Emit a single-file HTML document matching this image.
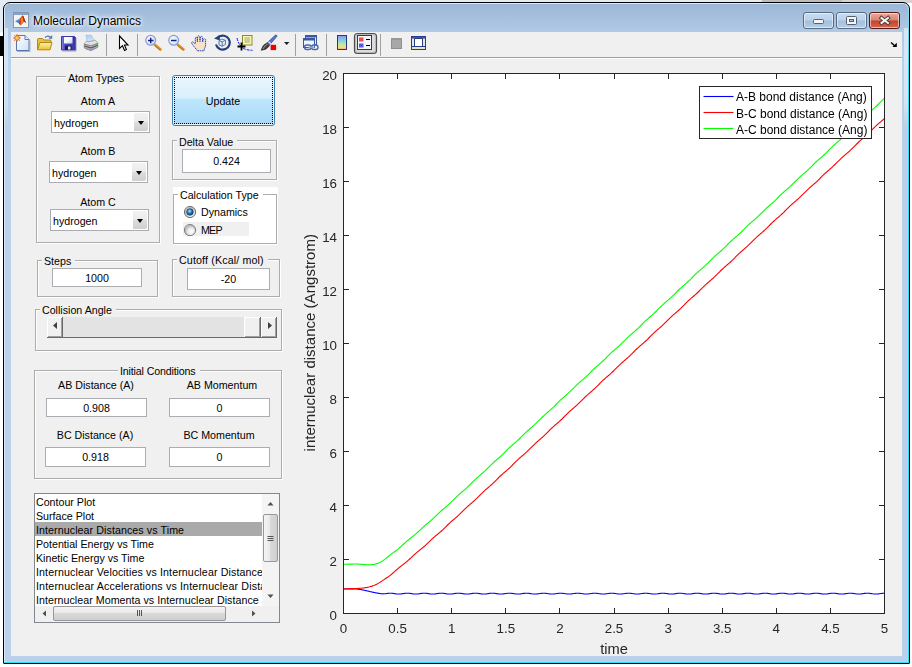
<!DOCTYPE html>
<html><head><meta charset="utf-8"><title>Molecular Dynamics</title>
<style>
html,body{margin:0;padding:0;}
body{width:912px;height:667px;overflow:hidden;background:#fff;position:relative;font-family:"Liberation Sans",Arial,sans-serif;font-size:10.67px;color:#000;}
div,span{box-sizing:border-box;}
.abs{position:absolute;}
#bgtop{left:0;top:0;width:912px;height:3px;background:linear-gradient(90deg,#e4ebf4 0,#e4ebf4 762px,#bdbdbd 762px,#bdbdbd 842px,#d4d4d4 842px);}
#bgleft{left:0;top:0;width:4px;height:36px;background:linear-gradient(#e4ebf4 0,#e4ebf4 32px,#fff 33px);}
#bgblack{left:0;top:36px;width:4px;height:20px;background:#000;}
#win{left:3px;top:2px;width:907px;height:662px;border:1px solid #000;border-radius:7px 7px 1px 1px;
 background:linear-gradient(#9cb7d7 0px,#a5bfdd 14px,#b2cae6 30px,#b9d1ea 60px,#b9d1ea 100%);box-shadow:inset 0 0 0 1px #d9e8f7;}
#cyan{left:4px;top:662px;width:905px;height:1px;background:#35dff5;}
#cyanr{left:908px;top:8px;width:1px;height:655px;background:linear-gradient(#8fd8f0,#35dff5 60px,#35dff5);}
#client{left:11px;top:32px;width:891px;height:624px;background:#f0f0f0;}
#tbline{left:11px;top:57px;width:891px;height:1px;background:#a0a0a0;}
#tbline2{left:11px;top:58px;width:891px;height:1px;background:#fff;}
#title{left:33px;top:13px;font-size:12px;line-height:16px;white-space:nowrap;color:#000;text-shadow:0 0 6px #fff,0 0 6px #fff,0 0 3px #fff;}
.cap{top:12px;height:17px;border:1px solid #5a6b80;border-radius:3px;box-shadow:inset 0 0 0 1px rgba(255,255,255,.55);}
.cap.n{background:linear-gradient(#c8dbf0 0,#bcd2ea 48%,#a3bfdf 52%,#b4cde8 100%);}
.cap.x{background:linear-gradient(#e9a99b 0,#d98573 48%,#c3422a 52%,#d3694f 100%);border-color:#5a1a14;}
.panel{border:1px solid #acacac;box-shadow:1px 1px 0 #fff, inset 1px 1px 0 #fff;}
.ptitle{background:#f0f0f0;white-space:nowrap;line-height:13px;height:13px;padding:1px 4px 0 2px;margin-left:-1px;}
.lbl{white-space:nowrap;line-height:13px;height:14px;text-align:center;padding-top:1px;}
.edit{background:#fff;border:1px solid #abadb3;text-align:center;line-height:1;white-space:nowrap;}
.edit span{position:absolute;left:0;right:0;text-align:center;}
.combo{background:#fff;border:1px solid #abadb3;}
.combo .t{position:absolute;left:2px;top:5px;line-height:13px;}
.combo .b{position:absolute;right:1px;top:1px;bottom:1px;width:14px;background:linear-gradient(#f2f2f2,#ebebeb 48%,#dddddd 52%,#cfcfcf);border-radius:0 2px 2px 0;}
.combo .b:after{content:"";position:absolute;left:4px;top:8px;border:3.5px solid transparent;border-top:4px solid #000;border-bottom:0;}
</style></head><body>
<div class="abs" id="bgleft"></div>
<div class="abs" id="bgtop"></div>
<div class="abs" id="bgblack"></div>
<div class="abs" id="win"></div>
<div class="abs" id="cyan"></div><div class="abs" id="cyanr"></div>
<div class="abs" style="left:904px;top:28px;width:4px;height:100px;background:linear-gradient(rgba(255,255,255,.5),rgba(255,255,255,.4) 75%,rgba(255,255,255,0));"></div><div class="abs" style="left:5px;top:28px;width:3px;height:100px;background:linear-gradient(rgba(255,255,255,.45),rgba(255,255,255,.3) 75%,rgba(255,255,255,0));"></div>
<div class="abs" id="client"></div>
<div class="abs" id="tbline"></div><div class="abs" id="tbline2"></div>
<div class="abs" id="title">Molecular Dynamics</div>
<!--CAPTION-->
<div class="abs cap n" style="left:803px;width:31px;"></div>
<div class="abs cap n" style="left:836px;width:31px;"></div>
<div class="abs cap x" style="left:869px;width:31px;"></div>
<!--TBSTART--><svg class="abs" style="left:0;top:0" width="912" height="64">
<defs>
<linearGradient id="gpage" x1="0" y1="0" x2="1" y2="1"><stop offset="0" stop-color="#ffffff"/><stop offset="1" stop-color="#cfe0f7"/></linearGradient>
<linearGradient id="gfold" x1="0" y1="0" x2="0" y2="1"><stop offset="0" stop-color="#fff3a8"/><stop offset="1" stop-color="#f0c030"/></linearGradient>
<linearGradient id="gcb" x1="0" y1="0" x2="0" y2="1"><stop offset="0" stop-color="#9a8ce8"/><stop offset="0.35" stop-color="#7fd0e8"/><stop offset="0.6" stop-color="#b8e8a8"/><stop offset="0.85" stop-color="#f8e080"/><stop offset="1" stop-color="#f0a080"/></linearGradient>
<linearGradient id="glens" x1="0" y1="0" x2="1" y2="1"><stop offset="0" stop-color="#ffffff"/><stop offset="1" stop-color="#b8e4ee"/></linearGradient>
<linearGradient id="gmat" x1="0" y1="0" x2="1" y2="0"><stop offset="0" stop-color="#2a6fc0"/><stop offset="0.45" stop-color="#5aa0d8"/><stop offset="0.55" stop-color="#c83018"/><stop offset="0.8" stop-color="#f08020"/><stop offset="1" stop-color="#b82818"/></linearGradient>
</defs>
<!-- matlab title icon -->
<rect x="13.5" y="12.5" width="15" height="15" fill="#f4f4f4" stroke="#8a97a8"/>
<rect x="14" y="13" width="14" height="2" fill="#7fa6d6"/>
<path d="M15.1 21.3 L19.8 18.6 L21.6 20.6 L18.6 23.3 z" fill="#3f86d0"/>
<path d="M15.1 21.3 L19.8 18.6 L20.4 19.4 z" fill="#7fc0e8"/>
<path d="M19.8 18.6 Q21 17.5 22.2 15.6 Q23.4 15.2 24.2 18 Q25.2 21.2 26.5 23.4 Q25 21.600 23.900 21.700 Q22.500 23.500 20.300 25.600 Q19.600 24.300 18.600 23.300 Q20.300 21.200 19.800 18.600 z" fill="#c8381c"/>
<path d="M20.6 19.2 Q21.6 17.6 22.300 15.900 Q23.200 18.500 23.600 21.600 Q22.300 23.300 20.400 25.200 Q21.600 22.200 20.600 19.200z" fill="#f08a1c"/>
<path d="M22.3 15.9 Q23.300 15.600 24 18 Q24.900 21 26.200 23 Q24.800 21.300 23.700 21.500 Q23.400 18.500 22.300 15.900z" fill="#a82418"/>
<!-- new -->
<path d="M16.5 35.5 h8.5 l4 4 v11 h-12.5z" fill="url(#gpage)" stroke="#5a74b0"/>
<path d="M25 35.5 v4 h4" fill="#e8f0fc" stroke="#5a74b0"/>
<path d="M17 51.5 h13 v-11" fill="none" stroke="#8898b8" opacity="0.7"/>
<g stroke="#e06030" stroke-width="1"><path d="M17 34.2v7.6M13.2 38h7.6M14.3 35.3l5.4 5.4M19.7 35.3l-5.4 5.4"/></g>
<circle cx="17" cy="38" r="2.3" fill="#f8d048" stroke="#e86830" stroke-width="1"/>
<!-- open -->
<path d="M37.5 49.5 v-10 q0 -1 1 -1 h4 l1.5 1.5 h6 q1 0 1 1 v2" fill="#e8c040" stroke="#b08818"/>
<path d="M37.5 49.8 l2.5 -7.3 h12 l-2 7.3z" fill="url(#gfold)" stroke="#b08818"/>
<path d="M45 37.5 q3 -3 6 0.2" fill="none" stroke="#4878c0" stroke-width="1.3"/>
<path d="M52.2 35 v3.8 h-3.6z" fill="#4878c0"/>
<!-- save -->
<linearGradient id="gsave" x1="0" y1="0" x2="1" y2="0"><stop offset="0" stop-color="#8c8ce4"/><stop offset="0.2" stop-color="#5050cc"/><stop offset="1" stop-color="#3434a4"/></linearGradient>
<linearGradient id="glabel" x1="0" y1="0" x2="1" y2="1"><stop offset="0" stop-color="#ffffff"/><stop offset="0.5" stop-color="#f4f6fc"/><stop offset="1" stop-color="#c4cce4"/></linearGradient>
<path d="M61.500 36.500 h13 l1 1 v12.500 h-14z" fill="url(#gsave)" stroke="#3838a8"/>
<path d="M62.500 51 h13.500 v-13" stroke="#8888b8" fill="none" opacity="0.8"/>
<rect x="64" y="37" width="8.500" height="6.500" fill="url(#glabel)"/>
<rect x="65" y="45.500" width="6.500" height="4.500" fill="#1c1c5c"/>
<rect x="68" y="46.500" width="2.500" height="3" fill="#e8e8f4"/>
<rect x="73.300" y="37.500" width="1" height="1.300" fill="#2a2a80"/>
<!-- print -->
<linearGradient id="gpaper" x1="0" y1="0" x2="0" y2="1"><stop offset="0" stop-color="#a8ccf4"/><stop offset="1" stop-color="#dcecfc"/></linearGradient>
<path d="M85.800 35.300 L91.300 35.300 L94.200 40.600 L87.400 41.800 Z" fill="url(#gpaper)" stroke="#98b8e0" stroke-width="0.600"/>
<path d="M84.300 43.200 L86.800 40.900 L87.400 41.800 L94.200 40.600 L94.800 39.900 L97.800 42.600 L97.800 43.500 L91 45.800 L84.300 44.200Z" fill="#e2e2e2" stroke="#909090" stroke-width="0.700"/>
<path d="M84.300 44.200 L91 45.800 L97.800 43.500 L97.800 47.200 L91 50.500 L84.300 48 Z" fill="#b0b0b0" stroke="#787878" stroke-width="0.700"/>
<path d="M84.500 46 L91 48 L97.600 45.300" stroke="#4c4c4c" stroke-width="1" fill="none"/>
<path d="M86 48.900 L91 50.400 L96.500 48" stroke="#8088c0" stroke-width="0.800" fill="none"/>
<rect x="95.200" y="43.900" width="1.300" height="1.300" fill="#30d030"/>
<!-- separators -->
<g stroke="#a0a0a0"><path d="M106.500 34v22M137.500 34v22M295.500 34v22M326.500 34v22M380.500 34v22"/></g>
<!-- pointer -->
<path d="M119.500 36 v12.500 l3 -2.800 l2 4.800 l1.900 -0.900 l-2 -4.600 h3.600z" fill="#fff" stroke="#000" stroke-width="1.100" stroke-linejoin="miter"/>
<!-- zoom in -->
<path d="M154.500 44.500 l6 5" stroke="#d89020" stroke-width="2.600" stroke-linecap="round"/>
<path d="M155 45.800 l5 4.200" stroke="#a86810" stroke-width="0.800"/>
<circle cx="150.700" cy="40.300" r="4.900" fill="url(#glens)" stroke="#9098d8" stroke-width="1.300"/>
<path d="M148 40.500h5.500M150.700 37.700v5.500" stroke="#18187a" stroke-width="1.400"/>
<!-- zoom out -->
<path d="M177.500 44.500 l6 5" stroke="#d89020" stroke-width="2.600" stroke-linecap="round"/>
<path d="M178 45.800 l5 4.200" stroke="#a86810" stroke-width="0.800"/>
<circle cx="173.700" cy="40.300" r="4.900" fill="url(#glens)" stroke="#9098d8" stroke-width="1.300"/>
<path d="M171 40.500h5.500" stroke="#18187a" stroke-width="1.400"/>
<!-- hand -->
<path d="M197.500 50.800 L194 46.500 L191.800 43.500 Q191.300 42 192.500 41.800 Q193.800 42 195.300 44 L195.300 38 Q196.200 36.300 197.200 38 L197.400 42 L197.600 36.500 Q198.600 34.800 199.700 36.500 L200 41.600 L200.500 37 Q201.600 35.600 202.500 37.200 L202.600 42.200 L203.400 39.200 Q204.500 38 205.600 39.500 L205.600 45 Q205.400 47.500 204.200 49 L204 50.800 Z" fill="#fae0c8" stroke="#2850b8" stroke-width="1" stroke-dasharray="1.600 0.600"/>
<!-- rotate -->
<path d="M218.500 37 a7 7 0 1 1 -2.500 7.500" fill="none" stroke="#22407a" stroke-width="2.200"/>
<path d="M214 38.500 l5.500 -3.500 l0.500 5.500z" fill="#22407a"/>
<path d="M219 40.500 l3 -1.500 l3.500 1.300 v4.200 l-3.300 1.800 l-3.200 -1.500z M219 40.500 l3.200 1.300 l3.300 -1.500 M222.200 41.800 v4.500" fill="#dfe8f4" stroke="#4870a8" stroke-width="0.900"/>
<!-- data cursor -->
<rect x="242.500" y="35.500" width="9.500" height="9.500" fill="#f8f6b8" stroke="#8c8838"/>
<path d="M244.500 38h5.500M244.500 40h5.500M244.500 42h5.500" stroke="#9c9858" stroke-width="0.900"/>
<path d="M237 38 q1.500 7 6 10 q3 2.200 9.500 2.300" fill="none" stroke="#1010f0" stroke-width="1" stroke-dasharray="3 1"/>
<path d="M241.500 42.500 v8 M237.500 46.500 h8" stroke="#000" stroke-width="1.800"/>
<!-- brush -->
<path d="M267 43 l8.300 -7.800 q1.500 -0.500 1.700 1 l-7.500 8.700z" fill="#5878d0" stroke="#3048a0" stroke-width="0.800"/>
<path d="M268.500 41.600 l2.300 2.300" stroke="#e8ecf8" stroke-width="1.200"/>
<path d="M261.200 50.300 q1.200 -5.500 5.500 -7.300 l2.800 2.700 q-2.500 4.200 -8.300 4.600z" fill="#404040" stroke="#202020" stroke-width="0.600"/>
<path d="M263 49 q1.500 -3.500 4.500 -5" stroke="#b0b0b0" stroke-width="0.800" fill="none"/>
<rect x="270.600" y="44.800" width="5.500" height="5.300" fill="#f00000"/>
<path d="M284 42 h5.400 l-2.700 3z" fill="#202020"/>
<!-- link -->
<rect x="305.500" y="35.500" width="11" height="9" fill="#e8eef8" stroke="#3858a0"/>
<rect x="305.500" y="35.500" width="11" height="2" fill="#3858a0"/>
<rect x="303.500" y="38.500" width="11" height="9" fill="#f0f4fa" stroke="#3858a0"/>
<rect x="303.500" y="38.500" width="11" height="2" fill="#3858a0"/>
<rect x="304.500" y="45" width="6.500" height="4.500" rx="2.200" fill="none" stroke="#4868a8" stroke-width="1.400"/>
<rect x="311.500" y="45" width="6.500" height="4.500" rx="2.200" fill="none" stroke="#4868a8" stroke-width="1.400"/>
<path d="M308.500 47.300 h6" stroke="#90a8d0" stroke-width="1.500"/>
<!-- colorbar -->
<rect x="337.500" y="35.500" width="9" height="14" fill="url(#gcb)" stroke="#283878"/>
<!-- legend pressed -->
<rect x="354.500" y="33.500" width="22" height="20" rx="3" fill="#dcdcdc" stroke="#505050" stroke-width="1.200"/>
<rect x="355.500" y="34.500" width="20" height="18" rx="2.500" fill="none" stroke="#b8b8b8"/>
<rect x="357.500" y="35.500" width="14" height="14" fill="#f4f6fc" stroke="#283878"/>
<rect x="359" y="37.500" width="4.500" height="4" fill="#e85050"/>
<rect x="359" y="43.500" width="4.500" height="4" fill="#5858e8"/>
<path d="M366 39.500h4M366 45.500h4" stroke="#000" stroke-width="1.200"/>
<!-- hide plot tools -->
<rect x="391.500" y="38.500" width="10" height="10" fill="#a8a8a8" stroke="#909090"/>
<rect x="391" y="38" width="11" height="2" fill="#989898"/>
<!-- show plot tools -->
<rect x="411.500" y="36.500" width="14" height="13" fill="#fff" stroke="#283c8c"/>
<rect x="411.500" y="36.500" width="14" height="2" fill="#3858b0" stroke="#283c8c"/>
<rect x="412" y="38.500" width="2.500" height="8" fill="#e8e8d8"/>
<rect x="422.500" y="38.500" width="2.500" height="8" fill="#e8e8d8"/>
<rect x="412" y="46.500" width="13" height="2.500" fill="#e8e4c8"/>
<path d="M414.500 38.500v8h8v-8" fill="none" stroke="#283c8c" stroke-width="1"/>
<path d="M412 46.500h13" stroke="#283c8c"/>
<!-- dock arrow -->
<path d="M891 42.500 l4 3.500" stroke="#000" stroke-width="1.400"/><path d="M896.800 42.800 v4.200 h-4.400z" fill="#000"/>
<!-- caption glyphs -->
<rect x="813.500" y="19.500" width="10" height="4" rx="1" fill="#f4f4f4" stroke="#555f6e"/>
<rect x="846.500" y="16.500" width="10" height="8" rx="1" fill="#f4f4f4" stroke="#555f6e"/>
<rect x="849.500" y="19.500" width="4" height="2" fill="#a8c0e0" stroke="#555f6e"/>
<path d="M881.500 18 l6.500 5 M888 18 l-6.500 5" stroke="#4a3030" stroke-width="3.800" stroke-linecap="square"/>
<path d="M881.500 18 l6.500 5 M888 18 l-6.500 5" stroke="#f4f4f4" stroke-width="2" stroke-linecap="square"/>
</svg>
<!--TBEND-->

<!-- Atom Types -->
<div class="abs panel" style="left:36px;top:76px;width:124px;height:167px;"></div>
<div class="abs ptitle" style="left:67px;top:71px;">Atom Types</div>
<div class="abs lbl" style="left:58px;top:94px;width:80px;">Atom A</div>
<div class="abs combo" style="left:51px;top:111px;width:99px;height:22px;"><span class="t">hydrogen</span><span class="b"></span></div>
<div class="abs lbl" style="left:58px;top:144px;width:80px;">Atom B</div>
<div class="abs combo" style="left:49px;top:161px;width:99px;height:22px;"><span class="t">hydrogen</span><span class="b"></span></div>
<div class="abs lbl" style="left:58px;top:195px;width:80px;">Atom C</div>
<div class="abs combo" style="left:50px;top:209px;width:99px;height:22px;"><span class="t">hydrogen</span><span class="b"></span></div>

<!-- Update -->
<div class="abs" style="left:172px;top:75px;width:103px;height:51px;border:1px solid #3c7fb1;border-radius:3px;background:linear-gradient(#eaf6fd 0,#d9f0fc 45%,#bee6fd 47%,#a7d9f5 100%);box-shadow:inset 0 0 0 1px #e6f5fd;"></div>
<div class="abs" style="left:174px;top:77px;width:99px;height:47px;border:1px dotted #000;"></div>
<div class="abs lbl" style="left:173px;top:94px;width:100px;">Update</div>

<!-- Delta Value -->
<div class="abs panel" style="left:172px;top:140px;width:105px;height:40px;"></div>
<div class="abs ptitle" style="left:178px;top:135px;">Delta Value</div>
<div class="abs edit" style="left:182px;top:149px;width:89px;height:24px;"><span style="top:6px;">0.424</span></div>

<!-- Calculation Type -->
<div class="abs" style="left:173px;top:187px;width:105px;height:58px;background:#fff;"></div>
<div class="abs panel" style="left:173px;top:194px;width:104px;height:50px;box-shadow:1px 1px 0 #fff;"></div>
<div class="abs ptitle" style="left:179px;top:188px;background:#fff;">Calculation Type</div>
<div class="abs" style="left:183px;top:222px;width:66px;height:14px;background:#f0f0f0;"></div>
<div class="abs lbl" style="left:201px;top:205px;text-align:left;">Dynamics</div>
<div class="abs lbl" style="left:201px;top:223px;text-align:left;letter-spacing:-0.8px;">MEP</div>
<svg class="abs" style="left:183px;top:205px" width="14" height="32">
<defs><radialGradient id="rg" cx="0.6" cy="0.62" r="0.62"><stop offset="0" stop-color="#ffffff"/><stop offset="0.45" stop-color="#ececec"/><stop offset="0.85" stop-color="#b8b8b8"/><stop offset="1" stop-color="#e8e8e8"/></radialGradient>
<radialGradient id="rb" cx="0.42" cy="0.36" r="0.7"><stop offset="0" stop-color="#b5ecff"/><stop offset="0.45" stop-color="#1f86c8"/><stop offset="1" stop-color="#082f60"/></radialGradient></defs>
<circle cx="7" cy="7" r="5.6" fill="url(#rg)" stroke="#6f6f6f" stroke-width="1"/>
<circle cx="7" cy="7" r="3.3" fill="url(#rb)" stroke="#1b3c66" stroke-width="0.7"/>
<circle cx="7" cy="25.1" r="5.6" fill="url(#rg)" stroke="#7a7a7a" stroke-width="1"/>
</svg>

<!-- Steps -->
<div class="abs panel" style="left:37px;top:260px;width:121px;height:37px;"></div>
<div class="abs ptitle" style="left:43px;top:254px;">Steps</div>
<div class="abs edit" style="left:52px;top:268px;width:90px;height:19px;"><span style="top:4px;">1000</span></div>

<!-- Cutoff -->
<div class="abs panel" style="left:172px;top:259px;width:108px;height:38px;"></div>
<div class="abs ptitle" style="left:178px;top:253px;letter-spacing:0.15px;">Cutoff (Kcal/ mol)</div>
<div class="abs edit" style="left:187px;top:268px;width:83px;height:22px;"><span style="top:5px;">-20</span></div>

<!-- Collision Angle -->
<div class="abs panel" style="left:35px;top:309px;width:247px;height:42px;"></div>
<div class="abs ptitle" style="left:41px;top:303px;">Collision Angle</div>
<!--SLIDER-->
<div class="abs" style="left:47px;top:317px;width:230px;height:21px;background:#e3e3e3;border-bottom:1px solid #696969;"></div>
<div class="abs" style="left:47px;top:317px;width:16px;height:21px;background:#f0f0f0;border-right:1px solid #696969;border-bottom:1px solid #696969;box-shadow:inset 1px 1px 0 #fff, inset -1px -1px 0 #a0a0a0;"></div>
<div class="abs" style="left:244px;top:317px;width:17px;height:21px;background:#f0f0f0;border-right:1px solid #696969;border-bottom:1px solid #696969;box-shadow:inset 1px 1px 0 #fff, inset -1px -1px 0 #a0a0a0;"></div>
<div class="abs" style="left:261px;top:317px;width:16px;height:21px;background:#f0f0f0;border-right:1px solid #696969;border-bottom:1px solid #696969;box-shadow:inset 1px 1px 0 #fff, inset -1px -1px 0 #a0a0a0;"></div>
<svg class="abs" style="left:47px;top:317px" width="230" height="21"><path d="M10 5 v7 l-4 -3.5z M221 5 v7 l4 -3.5z" fill="#404040"/></svg>

<!-- Initial Conditions -->
<div class="abs panel" style="left:34px;top:370px;width:248px;height:109px;"></div>
<div class="abs ptitle" style="left:119px;top:364px;letter-spacing:-0.15px;">Initial Conditions</div>
<div class="abs lbl" style="left:46px;top:378px;width:100px;">AB Distance (A)</div>
<div class="abs lbl" style="left:172px;top:378px;width:100px;">AB Momentum</div>
<div class="abs edit" style="left:46px;top:398px;width:101px;height:19px;"><span style="top:4px;">0.908</span></div>
<div class="abs edit" style="left:169px;top:398px;width:101px;height:19px;"><span style="top:4px;">0</span></div>
<div class="abs lbl" style="left:45px;top:428px;width:100px;">BC Distance (A)</div>
<div class="abs lbl" style="left:169px;top:428px;width:100px;">BC Momentum</div>
<div class="abs edit" style="left:45px;top:447px;width:101px;height:20px;"><span style="top:4px;">0.918</span></div>
<div class="abs edit" style="left:169px;top:447px;width:101px;height:20px;"><span style="top:4px;">0</span></div>

<!-- Listbox -->
<div class="abs" style="left:34px;top:493px;width:246px;height:130px;background:#fff;border:1px solid #828790;overflow:hidden;" id="lb">
 <div class="abs" style="left:0px;top:28px;width:227px;height:14px;background:#aaaaaa;"></div>
 <div class="abs" style="left:1px;top:1px;line-height:14px;white-space:nowrap;width:226px;overflow:hidden;">Contour Plot<br>Surface Plot<br><span style="letter-spacing:0.08px">Internuclear Distances vs Time</span><br>Potential Energy vs Time<br>Kinetic Energy vs Time<br><span style="letter-spacing:0.115px">Internuclear Velocities vs Internuclear Distance</span><br><span style="letter-spacing:0.16px">Internuclear Accelerations vs Internuclear Distance</span><br><span style="letter-spacing:0.04px">Internuclear Momenta vs Internuclear Distance</span></div>
 <div class="abs" style="left:227px;top:0;width:17px;height:112px;background:#f4f4f4;"></div>
 <div class="abs" style="left:0;top:112px;width:244px;height:16px;background:#f0f0f0;"></div>
 <div class="abs" style="left:228px;top:20px;width:15px;height:48px;border:1px solid #979797;border-radius:2px;background:linear-gradient(90deg,#f5f5f5,#e9e9e9 45%,#d9d9d9 50%,#cfcfcf);"></div>
 <div class="abs" style="left:18px;top:112px;width:173px;height:15px;border:1px solid #979797;border-radius:2px;background:linear-gradient(#f5f5f5,#e9e9e9 45%,#d9d9d9 50%,#cfcfcf);"></div>
 <svg class="abs" style="left:0;top:0" width="244" height="127"><path d="M232.500 11.500 h6 l-3 -3.500z M232.500 100.500 h6 l-3 3.500z M11 116.500 v6 l-3.500 -3z M217 116.500 v6 l3.500 -3z" fill="#505050"/>
 <path d="M232.5 42.5h6M232.5 44.5h6M232.5 46.5h6 M102.5 116v6M104.5 116v6M106.5 116v6" stroke="#555" stroke-width="1"/></svg>
</div>

<svg id="plot" width="912" height="667" style="position:absolute;left:0;top:0;will-change:transform">
<rect x="343.5" y="73.5" width="541.0" height="540.0" fill="#fff"/>
<clipPath id="cp"><rect x="343.5" y="73.5" width="541.5" height="540.0"/></clipPath>
<g clip-path="url(#cp)" fill="none" stroke-width="1.1">
<path d="M343.50,588.98 L344.27,588.98 L345.05,588.98 L345.82,588.98 L346.59,588.98 L347.36,588.98 L348.14,588.98 L348.91,588.98 L349.68,588.98 L350.46,588.98 L351.23,588.98 L352.00,588.98 L352.77,588.98 L353.55,588.98 L354.32,588.98 L355.09,588.99 L355.87,589.02 L356.64,589.07 L357.41,589.13 L358.18,589.21 L358.96,589.30 L359.73,589.40 L360.50,589.52 L361.28,589.65 L362.05,589.79 L362.82,589.93 L363.59,590.09 L364.37,590.25 L365.14,590.42 L365.91,590.60 L366.69,590.78 L367.46,590.96 L368.23,591.14 L369.00,591.32 L369.78,591.51 L370.55,591.69 L371.32,591.87 L372.10,592.05 L372.87,592.22 L373.64,592.39 L374.41,592.55 L375.19,592.71 L375.96,592.85 L376.73,592.98 L377.51,593.12 L378.28,593.26 L379.05,593.39 L379.82,593.52 L380.60,593.64 L381.37,593.73 L382.14,593.80 L382.92,593.83 L383.69,593.82 L384.46,593.77 L385.23,593.70 L386.01,593.62 L386.78,593.52 L387.55,593.41 L388.33,593.31 L389.10,593.23 L389.87,593.20 L390.64,593.20 L391.42,593.24 L392.19,593.31 L392.96,593.40 L393.74,593.52 L394.51,593.64 L395.28,593.76 L396.05,593.87 L396.83,593.96 L397.60,594.03 L398.37,594.06 L399.15,594.05 L399.92,594.02 L400.69,593.95 L401.46,593.85 L402.24,593.74 L403.01,593.62 L403.78,593.50 L404.56,593.39 L405.33,593.30 L406.10,593.23 L406.87,593.20 L407.65,593.20 L408.42,593.24 L409.19,593.31 L409.97,593.40 L410.74,593.51 L411.51,593.63 L412.28,593.75 L413.06,593.87 L413.83,593.96 L414.60,594.02 L415.38,594.06 L416.15,594.06 L416.92,594.02 L417.69,593.95 L418.47,593.86 L419.24,593.75 L420.01,593.63 L420.79,593.50 L421.56,593.39 L422.33,593.30 L423.10,593.23 L423.88,593.20 L424.65,593.20 L425.42,593.24 L426.20,593.30 L426.97,593.39 L427.74,593.51 L428.51,593.63 L429.29,593.75 L430.06,593.86 L430.83,593.95 L431.61,594.02 L432.38,594.06 L433.15,594.06 L433.92,594.02 L434.70,593.96 L435.47,593.86 L436.24,593.75 L437.02,593.63 L437.79,593.51 L438.56,593.40 L439.33,593.30 L440.11,593.24 L440.88,593.20 L441.65,593.20 L442.43,593.23 L443.20,593.30 L443.97,593.39 L444.74,593.50 L445.52,593.62 L446.29,593.74 L447.06,593.86 L447.84,593.95 L448.61,594.02 L449.38,594.05 L450.15,594.06 L450.93,594.02 L451.70,593.96 L452.47,593.87 L453.25,593.76 L454.02,593.64 L454.79,593.52 L455.56,593.40 L456.34,593.31 L457.11,593.24 L457.88,593.20 L458.66,593.20 L459.43,593.23 L460.20,593.29 L460.97,593.38 L461.75,593.49 L462.52,593.62 L463.29,593.74 L464.07,593.85 L464.84,593.95 L465.61,594.01 L466.38,594.05 L467.16,594.06 L467.93,594.03 L468.70,593.96 L469.48,593.87 L470.25,593.76 L471.02,593.64 L471.79,593.52 L472.57,593.41 L473.34,593.31 L474.11,593.24 L474.89,593.20 L475.66,593.20 L476.43,593.23 L477.20,593.29 L477.98,593.38 L478.75,593.49 L479.52,593.61 L480.30,593.73 L481.07,593.84 L481.84,593.94 L482.61,594.01 L483.39,594.05 L484.16,594.06 L484.93,594.03 L485.71,593.97 L486.48,593.88 L487.25,593.77 L488.02,593.65 L488.80,593.53 L489.57,593.41 L490.34,593.32 L491.12,593.25 L491.89,593.20 L492.66,593.20 L493.43,593.23 L494.21,593.29 L494.98,593.37 L495.75,593.48 L496.53,593.60 L497.30,593.73 L498.07,593.84 L498.84,593.94 L499.62,594.01 L500.39,594.05 L501.16,594.06 L501.94,594.03 L502.71,593.97 L503.48,593.88 L504.25,593.78 L505.03,593.66 L505.80,593.53 L506.57,593.42 L507.35,593.32 L508.12,593.25 L508.89,593.21 L509.66,593.20 L510.44,593.22 L511.21,593.28 L511.98,593.37 L512.76,593.48 L513.53,593.60 L514.30,593.72 L515.07,593.83 L515.85,593.93 L516.62,594.01 L517.39,594.05 L518.17,594.06 L518.94,594.03 L519.71,593.98 L520.48,593.89 L521.26,593.78 L522.03,593.66 L522.80,593.54 L523.58,593.42 L524.35,593.33 L525.12,593.25 L525.89,593.21 L526.67,593.20 L527.44,593.22 L528.21,593.28 L528.99,593.36 L529.76,593.47 L530.53,593.59 L531.30,593.71 L532.08,593.83 L532.85,593.93 L533.62,594.00 L534.40,594.05 L535.17,594.06 L535.94,594.04 L536.71,593.98 L537.49,593.89 L538.26,593.79 L539.03,593.67 L539.81,593.55 L540.58,593.43 L541.35,593.33 L542.12,593.25 L542.90,593.21 L543.67,593.20 L544.44,593.22 L545.22,593.28 L545.99,593.36 L546.76,593.47 L547.53,593.58 L548.31,593.71 L549.08,593.82 L549.85,593.92 L550.63,594.00 L551.40,594.05 L552.17,594.06 L552.94,594.04 L553.72,593.98 L554.49,593.90 L555.26,593.79 L556.04,593.67 L556.81,593.55 L557.58,593.44 L558.35,593.33 L559.13,593.26 L559.90,593.21 L560.67,593.20 L561.45,593.22 L562.22,593.27 L562.99,593.35 L563.76,593.46 L564.54,593.58 L565.31,593.70 L566.08,593.82 L566.86,593.92 L567.63,594.00 L568.40,594.05 L569.17,594.06 L569.95,594.04 L570.72,593.99 L571.49,593.90 L572.27,593.80 L573.04,593.68 L573.81,593.56 L574.58,593.44 L575.36,593.34 L576.13,593.26 L576.90,593.21 L577.68,593.20 L578.45,593.22 L579.22,593.27 L579.99,593.35 L580.77,593.45 L581.54,593.57 L582.31,593.69 L583.09,593.81 L583.86,593.91 L584.63,593.99 L585.40,594.04 L586.18,594.06 L586.95,594.04 L587.72,593.99 L588.50,593.91 L589.27,593.80 L590.04,593.69 L590.81,593.56 L591.59,593.45 L592.36,593.34 L593.13,593.26 L593.91,593.21 L594.68,593.20 L595.45,593.21 L596.22,593.26 L597.00,593.35 L597.77,593.45 L598.54,593.57 L599.32,593.69 L600.09,593.81 L600.86,593.91 L601.63,593.99 L602.41,594.04 L603.18,594.06 L603.95,594.04 L604.73,593.99 L605.50,593.91 L606.27,593.81 L607.04,593.69 L607.82,593.57 L608.59,593.45 L609.36,593.35 L610.14,593.27 L610.91,593.21 L611.68,593.20 L612.45,593.21 L613.23,593.26 L614.00,593.34 L614.77,593.44 L615.55,593.56 L616.32,593.68 L617.09,593.80 L617.86,593.91 L618.64,593.99 L619.41,594.04 L620.18,594.06 L620.96,594.04 L621.73,594.00 L622.50,593.92 L623.27,593.82 L624.05,593.70 L624.82,593.58 L625.59,593.46 L626.37,593.35 L627.14,593.27 L627.91,593.22 L628.68,593.20 L629.46,593.21 L630.23,593.26 L631.00,593.34 L631.78,593.44 L632.55,593.55 L633.32,593.68 L634.09,593.80 L634.87,593.90 L635.64,593.98 L636.41,594.04 L637.19,594.06 L637.96,594.05 L638.73,594.00 L639.50,593.92 L640.28,593.82 L641.05,593.71 L641.82,593.58 L642.60,593.46 L643.37,593.36 L644.14,593.27 L644.91,593.22 L645.69,593.20 L646.46,593.21 L647.23,593.26 L648.01,593.33 L648.78,593.43 L649.55,593.55 L650.32,593.67 L651.10,593.79 L651.87,593.90 L652.64,593.98 L653.42,594.04 L654.19,594.06 L654.96,594.05 L655.73,594.00 L656.51,593.93 L657.28,593.83 L658.05,593.71 L658.83,593.59 L659.60,593.47 L660.37,593.36 L661.14,593.28 L661.92,593.22 L662.69,593.20 L663.46,593.21 L664.24,593.25 L665.01,593.33 L665.78,593.43 L666.55,593.54 L667.33,593.66 L668.10,593.78 L668.87,593.89 L669.65,593.98 L670.42,594.03 L671.19,594.06 L671.96,594.05 L672.74,594.01 L673.51,593.93 L674.28,593.83 L675.06,593.72 L675.83,593.59 L676.60,593.48 L677.37,593.37 L678.15,593.28 L678.92,593.22 L679.69,593.20 L680.47,593.21 L681.24,593.25 L682.01,593.32 L682.78,593.42 L683.56,593.54 L684.33,593.66 L685.10,593.78 L685.88,593.89 L686.65,593.97 L687.42,594.03 L688.19,594.06 L688.97,594.05 L689.74,594.01 L690.51,593.94 L691.29,593.84 L692.06,593.72 L692.83,593.60 L693.60,593.48 L694.38,593.37 L695.15,593.28 L695.92,593.22 L696.70,593.20 L697.47,593.20 L698.24,593.25 L699.01,593.32 L699.79,593.42 L700.56,593.53 L701.33,593.65 L702.11,593.77 L702.88,593.88 L703.65,593.97 L704.42,594.03 L705.20,594.06 L705.97,594.05 L706.74,594.01 L707.52,593.94 L708.29,593.84 L709.06,593.73 L709.83,593.61 L710.61,593.49 L711.38,593.38 L712.15,593.29 L712.93,593.23 L713.70,593.20 L714.47,593.20 L715.24,593.24 L716.02,593.31 L716.79,593.41 L717.56,593.52 L718.34,593.65 L719.11,593.77 L719.88,593.88 L720.65,593.97 L721.43,594.03 L722.20,594.06 L722.97,594.05 L723.75,594.01 L724.52,593.94 L725.29,593.85 L726.06,593.74 L726.84,593.61 L727.61,593.49 L728.38,593.38 L729.16,593.29 L729.93,593.23 L730.70,593.20 L731.47,593.20 L732.25,593.24 L733.02,593.31 L733.79,593.40 L734.57,593.52 L735.34,593.64 L736.11,593.76 L736.88,593.87 L737.66,593.96 L738.43,594.03 L739.20,594.06 L739.98,594.05 L740.75,594.02 L741.52,593.95 L742.29,593.85 L743.07,593.74 L743.84,593.62 L744.61,593.50 L745.39,593.39 L746.16,593.30 L746.93,593.23 L747.70,593.20 L748.48,593.20 L749.25,593.24 L750.02,593.31 L750.80,593.40 L751.57,593.51 L752.34,593.63 L753.11,593.75 L753.89,593.87 L754.66,593.96 L755.43,594.02 L756.21,594.06 L756.98,594.06 L757.75,594.02 L758.52,593.95 L759.30,593.86 L760.07,593.75 L760.84,593.63 L761.62,593.50 L762.39,593.39 L763.16,593.30 L763.93,593.23 L764.71,593.20 L765.48,593.20 L766.25,593.24 L767.03,593.30 L767.80,593.39 L768.57,593.51 L769.34,593.63 L770.12,593.75 L770.89,593.86 L771.66,593.95 L772.44,594.02 L773.21,594.06 L773.98,594.06 L774.75,594.02 L775.53,593.96 L776.30,593.86 L777.07,593.75 L777.85,593.63 L778.62,593.51 L779.39,593.40 L780.16,593.30 L780.94,593.24 L781.71,593.20 L782.48,593.20 L783.26,593.23 L784.03,593.30 L784.80,593.39 L785.57,593.50 L786.35,593.62 L787.12,593.74 L787.89,593.86 L788.67,593.95 L789.44,594.02 L790.21,594.05 L790.98,594.06 L791.76,594.02 L792.53,593.96 L793.30,593.87 L794.08,593.76 L794.85,593.64 L795.62,593.52 L796.39,593.40 L797.17,593.31 L797.94,593.24 L798.71,593.20 L799.49,593.20 L800.26,593.23 L801.03,593.29 L801.80,593.38 L802.58,593.49 L803.35,593.62 L804.12,593.74 L804.90,593.85 L805.67,593.95 L806.44,594.01 L807.21,594.05 L807.99,594.06 L808.76,594.03 L809.53,593.96 L810.31,593.87 L811.08,593.76 L811.85,593.64 L812.62,593.52 L813.40,593.41 L814.17,593.31 L814.94,593.24 L815.72,593.20 L816.49,593.20 L817.26,593.23 L818.03,593.29 L818.81,593.38 L819.58,593.49 L820.35,593.61 L821.13,593.73 L821.90,593.84 L822.67,593.94 L823.44,594.01 L824.22,594.05 L824.99,594.06 L825.76,594.03 L826.54,593.97 L827.31,593.88 L828.08,593.77 L828.85,593.65 L829.63,593.53 L830.40,593.41 L831.17,593.32 L831.95,593.25 L832.72,593.20 L833.49,593.20 L834.26,593.23 L835.04,593.29 L835.81,593.37 L836.58,593.48 L837.36,593.60 L838.13,593.73 L838.90,593.84 L839.67,593.94 L840.45,594.01 L841.22,594.05 L841.99,594.06 L842.77,594.03 L843.54,593.97 L844.31,593.88 L845.08,593.78 L845.86,593.66 L846.63,593.53 L847.40,593.42 L848.18,593.32 L848.95,593.25 L849.72,593.21 L850.49,593.20 L851.27,593.22 L852.04,593.28 L852.81,593.37 L853.59,593.48 L854.36,593.60 L855.13,593.72 L855.90,593.83 L856.68,593.93 L857.45,594.01 L858.22,594.05 L859.00,594.06 L859.77,594.03 L860.54,593.98 L861.31,593.89 L862.09,593.78 L862.86,593.66 L863.63,593.54 L864.41,593.42 L865.18,593.33 L865.95,593.25 L866.72,593.21 L867.50,593.20 L868.27,593.22 L869.04,593.28 L869.82,593.36 L870.59,593.47 L871.36,593.59 L872.13,593.71 L872.91,593.83 L873.68,593.93 L874.45,594.00 L875.23,594.05 L876.00,594.06 L876.77,594.04 L877.54,593.98 L878.32,593.89 L879.09,593.79 L879.86,593.67 L880.64,593.55 L881.41,593.43 L882.18,593.33 L882.95,593.25 L883.73,593.21 L884.50,593.20" stroke="#0000ff"/>
<path d="M343.50,588.71 L344.27,588.71 L345.05,588.70 L345.82,588.70 L346.59,588.69 L347.36,588.68 L348.14,588.68 L348.91,588.67 L349.68,588.66 L350.46,588.65 L351.23,588.63 L352.00,588.62 L352.77,588.60 L353.55,588.58 L354.32,588.56 L355.09,588.54 L355.87,588.51 L356.64,588.48 L357.41,588.44 L358.18,588.40 L358.96,588.36 L359.73,588.31 L360.50,588.26 L361.28,588.19 L362.05,588.12 L362.82,588.04 L363.59,587.96 L364.37,587.86 L365.14,587.75 L365.91,587.63 L366.69,587.50 L367.46,587.35 L368.23,587.18 L369.00,587.00 L369.78,586.81 L370.55,586.59 L371.32,586.36 L372.10,586.11 L372.87,585.83 L373.64,585.54 L374.41,585.22 L375.19,584.89 L375.96,584.53 L376.73,584.16 L377.51,583.76 L378.28,583.33 L379.05,582.88 L379.82,582.40 L380.60,581.91 L381.37,581.41 L382.14,580.90 L382.92,580.38 L383.69,579.86 L384.46,579.34 L385.23,578.82 L386.01,578.30 L386.78,577.78 L387.55,577.25 L388.33,576.72 L389.10,576.16 L389.87,575.57 L390.64,574.97 L391.42,574.33 L392.19,573.68 L392.96,573.01 L393.74,572.33 L394.51,571.64 L395.28,570.95 L396.05,570.26 L396.83,569.58 L397.60,568.91 L398.37,568.25 L399.15,567.61 L399.92,566.98 L400.69,566.37 L401.46,565.76 L402.24,565.17 L403.01,564.58 L403.78,563.98 L404.56,563.38 L405.33,562.77 L406.10,562.15 L406.87,561.50 L407.65,560.84 L408.42,560.16 L409.19,559.47 L409.97,558.76 L410.74,558.04 L411.51,557.31 L412.28,556.58 L413.06,555.86 L413.83,555.14 L414.60,554.44 L415.38,553.75 L416.15,553.08 L416.92,552.42 L417.69,551.78 L418.47,551.15 L419.24,550.53 L420.01,549.92 L420.79,549.30 L421.56,548.67 L422.33,548.04 L423.10,547.39 L423.88,546.72 L424.65,546.04 L425.42,545.34 L426.20,544.62 L426.97,543.89 L427.74,543.14 L428.51,542.39 L429.29,541.64 L430.06,540.90 L430.83,540.16 L431.61,539.43 L432.38,538.72 L433.15,538.03 L433.92,537.35 L434.70,536.69 L435.47,536.04 L436.24,535.39 L437.02,534.76 L437.79,534.12 L438.56,533.47 L439.33,532.82 L440.11,532.15 L440.88,531.47 L441.65,530.77 L442.43,530.05 L443.20,529.31 L443.97,528.56 L444.74,527.80 L445.52,527.03 L446.29,526.27 L447.06,525.50 L447.84,524.75 L448.61,524.01 L449.38,523.28 L450.15,522.57 L450.93,521.88 L451.70,521.20 L452.47,520.53 L453.25,519.88 L454.02,519.23 L454.79,518.58 L455.56,517.92 L456.34,517.26 L457.11,516.58 L457.88,515.89 L458.66,515.17 L459.43,514.45 L460.20,513.70 L460.97,512.94 L461.75,512.17 L462.52,511.40 L463.29,510.62 L464.07,509.85 L464.84,509.09 L465.61,508.34 L466.38,507.60 L467.16,506.88 L467.93,506.18 L468.70,505.50 L469.48,504.83 L470.25,504.16 L471.02,503.51 L471.79,502.85 L472.57,502.19 L473.34,501.52 L474.11,500.84 L474.89,500.14 L475.66,499.43 L476.43,498.69 L477.20,497.95 L477.98,497.18 L478.75,496.41 L479.52,495.63 L480.30,494.85 L481.07,494.08 L481.84,493.31 L482.61,492.56 L483.39,491.82 L484.16,491.10 L484.93,490.39 L485.71,489.70 L486.48,489.03 L487.25,488.36 L488.02,487.71 L488.80,487.05 L489.57,486.39 L490.34,485.71 L491.12,485.03 L491.89,484.33 L492.66,483.62 L493.43,482.88 L494.21,482.13 L494.98,481.37 L495.75,480.60 L496.53,479.82 L497.30,479.04 L498.07,478.26 L498.84,477.49 L499.62,476.73 L500.39,475.99 L501.16,475.27 L501.94,474.56 L502.71,473.87 L503.48,473.20 L504.25,472.53 L505.03,471.87 L505.80,471.21 L506.57,470.55 L507.35,469.88 L508.12,469.20 L508.89,468.50 L509.66,467.78 L510.44,467.05 L511.21,466.30 L511.98,465.54 L512.76,464.76 L513.53,463.98 L514.30,463.20 L515.07,462.42 L515.85,461.65 L516.62,460.90 L517.39,460.16 L518.17,459.43 L518.94,458.72 L519.71,458.03 L520.48,457.35 L521.26,456.69 L522.03,456.03 L522.80,455.37 L523.58,454.71 L524.35,454.04 L525.12,453.35 L525.89,452.65 L526.67,451.94 L527.44,451.21 L528.21,450.46 L528.99,449.70 L529.76,448.92 L530.53,448.14 L531.30,447.36 L532.08,446.58 L532.85,445.81 L533.62,445.05 L534.40,444.31 L535.17,443.59 L535.94,442.88 L536.71,442.19 L537.49,441.51 L538.26,440.84 L539.03,440.18 L539.81,439.52 L540.58,438.86 L541.35,438.19 L542.12,437.51 L542.90,436.81 L543.67,436.09 L544.44,435.36 L545.22,434.61 L545.99,433.85 L546.76,433.08 L547.53,432.30 L548.31,431.52 L549.08,430.74 L549.85,429.97 L550.63,429.21 L551.40,428.47 L552.17,427.74 L552.94,427.03 L553.72,426.34 L554.49,425.66 L555.26,424.99 L556.04,424.33 L556.81,423.67 L557.58,423.01 L558.35,422.34 L559.13,421.66 L559.90,420.96 L560.67,420.25 L561.45,419.52 L562.22,418.77 L562.99,418.01 L563.76,417.24 L564.54,416.46 L565.31,415.67 L566.08,414.90 L566.86,414.12 L567.63,413.36 L568.40,412.62 L569.17,411.89 L569.95,411.18 L570.72,410.49 L571.49,409.81 L572.27,409.14 L573.04,408.48 L573.81,407.82 L574.58,407.16 L575.36,406.49 L576.13,405.81 L576.90,405.11 L577.68,404.40 L578.45,403.67 L579.22,402.92 L579.99,402.16 L580.77,401.39 L581.54,400.61 L582.31,399.83 L583.09,399.05 L583.86,398.28 L584.63,397.52 L585.40,396.77 L586.18,396.05 L586.95,395.33 L587.72,394.64 L588.50,393.96 L589.27,393.29 L590.04,392.63 L590.81,391.97 L591.59,391.31 L592.36,390.64 L593.13,389.96 L593.91,389.27 L594.68,388.55 L595.45,387.83 L596.22,387.08 L597.00,386.32 L597.77,385.55 L598.54,384.77 L599.32,383.99 L600.09,383.21 L600.86,382.43 L601.63,381.67 L602.41,380.93 L603.18,380.20 L603.95,379.49 L604.73,378.79 L605.50,378.11 L606.27,377.44 L607.04,376.78 L607.82,376.12 L608.59,375.46 L609.36,374.79 L610.14,374.11 L610.91,373.42 L611.68,372.71 L612.45,371.98 L613.23,371.23 L614.00,370.47 L614.77,369.70 L615.55,368.92 L616.32,368.14 L617.09,367.36 L617.86,366.59 L618.64,365.83 L619.41,365.08 L620.18,364.35 L620.96,363.64 L621.73,362.94 L622.50,362.26 L623.27,361.59 L624.05,360.93 L624.82,360.27 L625.59,359.61 L626.37,358.94 L627.14,358.26 L627.91,357.57 L628.68,356.86 L629.46,356.13 L630.23,355.39 L631.00,354.63 L631.78,353.86 L632.55,353.08 L633.32,352.30 L634.09,351.52 L634.87,350.75 L635.64,349.98 L636.41,349.24 L637.19,348.50 L637.96,347.79 L638.73,347.09 L639.50,346.41 L640.28,345.74 L641.05,345.08 L641.82,344.42 L642.60,343.76 L643.37,343.09 L644.14,342.41 L644.91,341.72 L645.69,341.01 L646.46,340.29 L647.23,339.54 L648.01,338.78 L648.78,338.01 L649.55,337.24 L650.32,336.45 L651.10,335.67 L651.87,334.90 L652.64,334.14 L653.42,333.39 L654.19,332.66 L654.96,331.94 L655.73,331.25 L656.51,330.56 L657.28,329.89 L658.05,329.23 L658.83,328.57 L659.60,327.91 L660.37,327.24 L661.14,326.57 L661.92,325.87 L662.69,325.17 L663.46,324.44 L664.24,323.70 L665.01,322.94 L665.78,322.17 L666.55,321.39 L667.33,320.61 L668.10,319.83 L668.87,319.06 L669.65,318.29 L670.42,317.54 L671.19,316.81 L671.96,316.10 L672.74,315.40 L673.51,314.71 L674.28,314.04 L675.06,313.38 L675.83,312.72 L676.60,312.06 L677.37,311.39 L678.15,310.72 L678.92,310.03 L679.69,309.32 L680.47,308.59 L681.24,307.85 L682.01,307.09 L682.78,306.33 L683.56,305.55 L684.33,304.77 L685.10,303.99 L685.88,303.21 L686.65,302.45 L687.42,301.70 L688.19,300.96 L688.97,300.25 L689.74,299.55 L690.51,298.86 L691.29,298.19 L692.06,297.53 L692.83,296.87 L693.60,296.21 L694.38,295.54 L695.15,294.87 L695.92,294.18 L696.70,293.47 L697.47,292.75 L698.24,292.01 L699.01,291.25 L699.79,290.48 L700.56,289.70 L701.33,288.92 L702.11,288.14 L702.88,287.37 L703.65,286.60 L704.42,285.85 L705.20,285.12 L705.97,284.40 L706.74,283.70 L707.52,283.02 L708.29,282.34 L709.06,281.68 L709.83,281.02 L710.61,280.36 L711.38,279.69 L712.15,279.02 L712.93,278.33 L713.70,277.62 L714.47,276.90 L715.24,276.16 L716.02,275.40 L716.79,274.64 L717.56,273.86 L718.34,273.08 L719.11,272.30 L719.88,271.52 L720.65,270.76 L721.43,270.01 L722.20,269.27 L722.97,268.55 L723.75,267.85 L724.52,267.17 L725.29,266.49 L726.06,265.83 L726.84,265.17 L727.61,264.51 L728.38,263.85 L729.16,263.17 L729.93,262.48 L730.70,261.78 L731.47,261.05 L732.25,260.31 L733.02,259.56 L733.79,258.79 L734.57,258.02 L735.34,257.23 L736.11,256.45 L736.88,255.68 L737.66,254.91 L738.43,254.16 L739.20,253.42 L739.98,252.70 L740.75,252.00 L741.52,251.32 L742.29,250.64 L743.07,249.98 L743.84,249.32 L744.61,248.66 L745.39,248.00 L746.16,247.32 L746.93,246.63 L747.70,245.93 L748.48,245.21 L749.25,244.47 L750.02,243.71 L750.80,242.95 L751.57,242.17 L752.34,241.39 L753.11,240.61 L753.89,239.83 L754.66,239.07 L755.43,238.31 L756.21,237.58 L756.98,236.86 L757.75,236.15 L758.52,235.47 L759.30,234.79 L760.07,234.13 L760.84,233.47 L761.62,232.81 L762.39,232.15 L763.16,231.47 L763.93,230.78 L764.71,230.08 L765.48,229.36 L766.25,228.62 L767.03,227.87 L767.80,227.10 L768.57,226.33 L769.34,225.55 L770.12,224.76 L770.89,223.99 L771.66,223.22 L772.44,222.47 L773.21,221.73 L773.98,221.01 L774.75,220.31 L775.53,219.62 L776.30,218.94 L777.07,218.28 L777.85,217.62 L778.62,216.96 L779.39,216.30 L780.16,215.62 L780.94,214.94 L781.71,214.23 L782.48,213.51 L783.26,212.78 L784.03,212.02 L784.80,211.26 L785.57,210.48 L786.35,209.70 L787.12,208.92 L787.89,208.14 L788.67,207.38 L789.44,206.62 L790.21,205.88 L790.98,205.16 L791.76,204.46 L792.53,203.77 L793.30,203.10 L794.08,202.43 L794.85,201.77 L795.62,201.11 L796.39,200.45 L797.17,199.77 L797.94,199.09 L798.71,198.39 L799.49,197.67 L800.26,196.93 L801.03,196.18 L801.80,195.41 L802.58,194.64 L803.35,193.86 L804.12,193.08 L804.90,192.30 L805.67,191.53 L806.44,190.78 L807.21,190.04 L807.99,189.31 L808.76,188.61 L809.53,187.92 L810.31,187.25 L811.08,186.58 L811.85,185.92 L812.62,185.26 L813.40,184.60 L814.17,183.92 L814.94,183.24 L815.72,182.54 L816.49,181.82 L817.26,181.09 L818.03,180.33 L818.81,179.57 L819.58,178.79 L820.35,178.01 L821.13,177.23 L821.90,176.46 L822.67,175.69 L823.44,174.93 L824.22,174.19 L824.99,173.47 L825.76,172.76 L826.54,172.07 L827.31,171.40 L828.08,170.73 L828.85,170.07 L829.63,169.41 L830.40,168.75 L831.17,168.08 L831.95,167.39 L832.72,166.69 L833.49,165.97 L834.26,165.24 L835.04,164.49 L835.81,163.72 L836.58,162.95 L837.36,162.17 L838.13,161.39 L838.90,160.61 L839.67,159.84 L840.45,159.09 L841.22,158.34 L841.99,157.62 L842.77,156.91 L843.54,156.22 L844.31,155.55 L845.08,154.88 L845.86,154.22 L846.63,153.56 L847.40,152.90 L848.18,152.23 L848.95,151.54 L849.72,150.84 L850.49,150.13 L851.27,149.39 L852.04,148.64 L852.81,147.88 L853.59,147.11 L854.36,146.33 L855.13,145.54 L855.90,144.77 L856.68,144.00 L857.45,143.24 L858.22,142.50 L859.00,141.77 L859.77,141.07 L860.54,140.37 L861.31,139.70 L862.09,139.03 L862.86,138.37 L863.63,137.71 L864.41,137.05 L865.18,136.38 L865.95,135.69 L866.72,135.00 L867.50,134.28 L868.27,133.55 L869.04,132.80 L869.82,132.04 L870.59,131.26 L871.36,130.48 L872.13,129.70 L872.91,128.92 L873.68,128.15 L874.45,127.39 L875.23,126.65 L876.00,125.93 L876.77,125.22 L877.54,124.53 L878.32,123.85 L879.09,123.18 L879.86,122.52 L880.64,121.86 L881.41,121.20 L882.18,120.53 L882.95,119.85 L883.73,119.15 L884.50,118.43" stroke="#ff0000"/>
<path d="M343.50,564.20 L344.27,564.19 L345.05,564.19 L345.82,564.18 L346.59,564.18 L347.36,564.17 L348.14,564.16 L348.91,564.15 L349.68,564.14 L350.46,564.13 L351.23,564.12 L352.00,564.10 L352.77,564.08 L353.55,564.07 L354.32,564.04 L355.09,564.03 L355.87,564.03 L356.64,564.04 L357.41,564.07 L358.18,564.11 L358.96,564.16 L359.73,564.21 L360.50,564.28 L361.28,564.34 L362.05,564.41 L362.82,564.48 L363.59,564.55 L364.37,564.61 L365.14,564.67 L365.91,564.73 L366.69,564.77 L367.46,564.80 L368.23,564.82 L369.00,564.83 L369.78,564.82 L370.55,564.78 L371.32,564.73 L372.10,564.66 L372.87,564.56 L373.64,564.43 L374.41,564.28 L375.19,564.10 L375.96,563.89 L376.73,563.64 L377.51,563.38 L378.28,563.09 L379.05,562.77 L379.82,562.43 L380.60,562.05 L381.37,561.64 L382.14,561.19 L382.92,560.71 L383.69,560.17 L384.46,559.61 L385.23,559.02 L386.01,558.42 L386.78,557.80 L387.55,557.16 L388.33,556.52 L389.10,555.89 L389.87,555.27 L390.64,554.67 L391.42,554.08 L392.19,553.49 L392.96,552.92 L393.74,552.35 L394.51,551.78 L395.28,551.21 L396.05,550.63 L396.83,550.04 L397.60,549.43 L398.37,548.81 L399.15,548.16 L399.92,547.50 L400.69,546.81 L401.46,546.12 L402.24,545.41 L403.01,544.70 L403.78,543.98 L404.56,543.27 L405.33,542.57 L406.10,541.88 L406.87,541.20 L407.65,540.54 L408.42,539.90 L409.19,539.27 L409.97,538.66 L410.74,538.05 L411.51,537.44 L412.28,536.84 L413.06,536.22 L413.83,535.60 L414.60,534.96 L415.38,534.31 L416.15,533.63 L416.92,532.94 L417.69,532.23 L418.47,531.51 L419.24,530.78 L420.01,530.04 L420.79,529.30 L421.56,528.57 L422.33,527.84 L423.10,527.12 L423.88,526.42 L424.65,525.74 L425.42,525.07 L426.20,524.42 L426.97,523.78 L427.74,523.15 L428.51,522.52 L429.29,521.89 L430.06,521.26 L430.83,520.61 L431.61,519.95 L432.38,519.28 L433.15,518.58 L433.92,517.87 L434.70,517.14 L435.47,516.40 L436.24,515.65 L437.02,514.89 L437.79,514.13 L438.56,513.37 L439.33,512.62 L440.11,511.89 L440.88,511.17 L441.65,510.47 L442.43,509.78 L443.20,509.11 L443.97,508.45 L444.74,507.80 L445.52,507.15 L446.29,506.51 L447.06,505.86 L447.84,505.20 L448.61,504.52 L449.38,503.83 L450.15,503.13 L450.93,502.40 L451.70,501.66 L452.47,500.90 L453.25,500.14 L454.02,499.37 L454.79,498.59 L455.56,497.83 L456.34,497.07 L457.11,496.32 L457.88,495.59 L458.66,494.87 L459.43,494.18 L460.20,493.49 L460.97,492.83 L461.75,492.17 L462.52,491.51 L463.29,490.86 L464.07,490.20 L464.84,489.53 L465.61,488.85 L466.38,488.15 L467.16,487.44 L467.93,486.71 L468.70,485.96 L469.48,485.20 L470.25,484.43 L471.02,483.65 L471.79,482.87 L472.57,482.10 L473.34,481.33 L474.11,480.58 L474.89,479.85 L475.66,479.13 L476.43,478.42 L477.20,477.74 L477.98,477.06 L478.75,476.40 L479.52,475.74 L480.30,475.08 L481.07,474.42 L481.84,473.75 L482.61,473.07 L483.39,472.37 L484.16,471.65 L484.93,470.92 L485.71,470.17 L486.48,469.41 L487.25,468.63 L488.02,467.86 L488.80,467.08 L489.57,466.30 L490.34,465.53 L491.12,464.78 L491.89,464.04 L492.66,463.31 L493.43,462.61 L494.21,461.92 L494.98,461.24 L495.75,460.58 L496.53,459.92 L497.30,459.26 L498.07,458.60 L498.84,457.93 L499.62,457.24 L500.39,456.54 L501.16,455.83 L501.94,455.10 L502.71,454.35 L503.48,453.58 L504.25,452.81 L505.03,452.03 L505.80,451.25 L506.57,450.47 L507.35,449.70 L508.12,448.94 L508.89,448.20 L509.66,447.48 L510.44,446.77 L511.21,446.08 L511.98,445.41 L512.76,444.74 L513.53,444.08 L514.30,443.42 L515.07,442.76 L515.85,442.09 L516.62,441.40 L517.39,440.70 L518.17,439.99 L518.94,439.26 L519.71,438.51 L520.48,437.74 L521.26,436.97 L522.03,436.19 L522.80,435.41 L523.58,434.63 L524.35,433.86 L525.12,433.10 L525.89,432.36 L526.67,431.64 L527.44,430.93 L528.21,430.24 L528.99,429.56 L529.76,428.89 L530.53,428.23 L531.30,427.57 L532.08,426.91 L532.85,426.24 L533.62,425.56 L534.40,424.86 L535.17,424.15 L535.94,423.41 L536.71,422.66 L537.49,421.90 L538.26,421.13 L539.03,420.35 L539.81,419.57 L540.58,418.79 L541.35,418.02 L542.12,417.26 L542.90,416.52 L543.67,415.79 L544.44,415.08 L545.22,414.39 L545.99,413.71 L546.76,413.04 L547.53,412.38 L548.31,411.72 L549.08,411.06 L549.85,410.39 L550.63,409.71 L551.40,409.01 L552.17,408.30 L552.94,407.57 L553.72,406.82 L554.49,406.06 L555.26,405.29 L556.04,404.51 L556.81,403.72 L557.58,402.95 L558.35,402.17 L559.13,401.42 L559.90,400.67 L560.67,399.94 L561.45,399.23 L562.22,398.54 L562.99,397.86 L563.76,397.19 L564.54,396.53 L565.31,395.87 L566.08,395.21 L566.86,394.54 L567.63,393.86 L568.40,393.17 L569.17,392.45 L569.95,391.72 L570.72,390.98 L571.49,390.21 L572.27,389.44 L573.04,388.66 L573.81,387.88 L574.58,387.10 L575.36,386.33 L576.13,385.57 L576.90,384.83 L577.68,384.10 L578.45,383.39 L579.22,382.69 L579.99,382.01 L580.77,381.34 L581.54,380.68 L582.31,380.02 L583.09,379.36 L583.86,378.69 L584.63,378.01 L585.40,377.32 L586.18,376.61 L586.95,375.88 L587.72,375.13 L588.50,374.37 L589.27,373.60 L590.04,372.82 L590.81,372.04 L591.59,371.26 L592.36,370.49 L593.13,369.72 L593.91,368.98 L594.68,368.25 L595.45,367.54 L596.22,366.84 L597.00,366.16 L597.77,365.50 L598.54,364.83 L599.32,364.17 L600.09,363.51 L600.86,362.84 L601.63,362.16 L602.41,361.47 L603.18,360.76 L603.95,360.03 L604.73,359.28 L605.50,358.52 L606.27,357.75 L607.04,356.97 L607.82,356.19 L608.59,355.41 L609.36,354.64 L610.14,353.88 L610.91,353.13 L611.68,352.40 L612.45,351.69 L613.23,351.00 L614.00,350.31 L614.77,349.65 L615.55,348.98 L616.32,348.32 L617.09,347.66 L617.86,347.00 L618.64,346.32 L619.41,345.62 L620.18,344.91 L620.96,344.18 L621.73,343.44 L622.50,342.68 L623.27,341.91 L624.05,341.13 L624.82,340.35 L625.59,339.57 L626.37,338.80 L627.14,338.03 L627.91,337.29 L628.68,336.56 L629.46,335.84 L630.23,335.15 L631.00,334.47 L631.78,333.80 L632.55,333.13 L633.32,332.47 L634.09,331.81 L634.87,331.15 L635.64,330.47 L636.41,329.77 L637.19,329.06 L637.96,328.34 L638.73,327.59 L639.50,326.83 L640.28,326.06 L641.05,325.29 L641.82,324.50 L642.60,323.72 L643.37,322.95 L644.14,322.19 L644.91,321.44 L645.69,320.71 L646.46,320.00 L647.23,319.30 L648.01,318.62 L648.78,317.95 L649.55,317.28 L650.32,316.62 L651.10,315.96 L651.87,315.30 L652.64,314.62 L653.42,313.93 L654.19,313.22 L654.96,312.49 L655.73,311.75 L656.51,310.99 L657.28,310.22 L658.05,309.44 L658.83,308.66 L659.60,307.88 L660.37,307.11 L661.14,306.34 L661.92,305.59 L662.69,304.86 L663.46,304.15 L664.24,303.45 L665.01,302.77 L665.78,302.10 L666.55,301.43 L667.33,300.77 L668.10,300.11 L668.87,299.45 L669.65,298.77 L670.42,298.08 L671.19,297.37 L671.96,296.64 L672.74,295.90 L673.51,295.15 L674.28,294.38 L675.06,293.60 L675.83,292.82 L676.60,292.04 L677.37,291.26 L678.15,290.50 L678.92,289.75 L679.69,289.02 L680.47,288.30 L681.24,287.60 L682.01,286.92 L682.78,286.25 L683.56,285.58 L684.33,284.92 L685.10,284.26 L685.88,283.60 L686.65,282.92 L687.42,282.23 L688.19,281.52 L688.97,280.80 L689.74,280.06 L690.51,279.30 L691.29,278.53 L692.06,277.75 L692.83,276.97 L693.60,276.19 L694.38,275.42 L695.15,274.65 L695.92,273.90 L696.70,273.17 L697.47,272.45 L698.24,271.75 L699.01,271.07 L699.79,270.40 L700.56,269.73 L701.33,269.07 L702.11,268.41 L702.88,267.75 L703.65,267.07 L704.42,266.38 L705.20,265.68 L705.97,264.95 L706.74,264.21 L707.52,263.46 L708.29,262.69 L709.06,261.91 L709.83,261.13 L710.61,260.35 L711.38,259.57 L712.15,258.81 L712.93,258.06 L713.70,257.32 L714.47,256.60 L715.24,255.90 L716.02,255.22 L716.79,254.55 L717.56,253.88 L718.34,253.22 L719.11,252.56 L719.88,251.90 L720.65,251.22 L721.43,250.53 L722.20,249.83 L722.97,249.11 L723.75,248.37 L724.52,247.61 L725.29,246.84 L726.06,246.07 L726.84,245.28 L727.61,244.50 L728.38,243.73 L729.16,242.96 L729.93,242.21 L730.70,241.48 L731.47,240.76 L732.25,240.06 L733.02,239.37 L733.79,238.70 L734.57,238.03 L735.34,237.37 L736.11,236.71 L736.88,236.05 L737.66,235.37 L738.43,234.69 L739.20,233.98 L739.98,233.26 L740.75,232.52 L741.52,231.77 L742.29,231.00 L743.07,230.22 L743.84,229.44 L744.61,228.66 L745.39,227.88 L746.16,227.12 L746.93,226.36 L747.70,225.63 L748.48,224.91 L749.25,224.21 L750.02,223.52 L750.80,222.85 L751.57,222.18 L752.34,221.52 L753.11,220.86 L753.89,220.20 L754.66,219.52 L755.43,218.84 L756.21,218.13 L756.98,217.41 L757.75,216.67 L758.52,215.92 L759.30,215.15 L760.07,214.38 L760.84,213.60 L761.62,212.81 L762.39,212.04 L763.16,211.27 L763.93,210.52 L764.71,209.78 L765.48,209.06 L766.25,208.36 L767.03,207.67 L767.80,207.00 L768.57,206.33 L769.34,205.67 L770.12,205.01 L770.89,204.35 L771.66,203.68 L772.44,202.99 L773.21,202.29 L773.98,201.57 L774.75,200.83 L775.53,200.08 L776.30,199.31 L777.07,198.53 L777.85,197.75 L778.62,196.97 L779.39,196.19 L780.16,195.43 L780.94,194.67 L781.71,193.94 L782.48,193.21 L783.26,192.51 L784.03,191.82 L784.80,191.15 L785.57,190.48 L786.35,189.82 L787.12,189.16 L787.89,188.50 L788.67,187.83 L789.44,187.14 L790.21,186.44 L790.98,185.72 L791.76,184.98 L792.53,184.23 L793.30,183.46 L794.08,182.69 L794.85,181.91 L795.62,181.13 L796.39,180.35 L797.17,179.58 L797.94,178.83 L798.71,178.09 L799.49,177.37 L800.26,176.66 L801.03,175.97 L801.80,175.30 L802.58,174.63 L803.35,173.97 L804.12,173.31 L804.90,172.65 L805.67,171.98 L806.44,171.29 L807.21,170.59 L807.99,169.87 L808.76,169.14 L809.53,168.39 L810.31,167.62 L811.08,166.84 L811.85,166.06 L812.62,165.28 L813.40,164.51 L814.17,163.74 L814.94,162.98 L815.72,162.24 L816.49,161.52 L817.26,160.81 L818.03,160.12 L818.81,159.45 L819.58,158.78 L820.35,158.12 L821.13,157.46 L821.90,156.80 L822.67,156.13 L823.44,155.44 L824.22,154.74 L824.99,154.03 L825.76,153.29 L826.54,152.54 L827.31,151.78 L828.08,151.00 L828.85,150.22 L829.63,149.44 L830.40,148.66 L831.17,147.89 L831.95,147.14 L832.72,146.40 L833.49,145.67 L834.26,144.97 L835.04,144.28 L835.81,143.60 L836.58,142.93 L837.36,142.27 L838.13,141.61 L838.90,140.95 L839.67,140.28 L840.45,139.59 L841.22,138.90 L841.99,138.18 L842.77,137.44 L843.54,136.69 L844.31,135.93 L845.08,135.16 L845.86,134.38 L846.63,133.59 L847.40,132.82 L848.18,132.05 L848.95,131.29 L849.72,130.55 L850.49,129.82 L851.27,129.12 L852.04,128.43 L852.81,127.75 L853.59,127.08 L854.36,126.42 L855.13,125.76 L855.90,125.10 L856.68,124.43 L857.45,123.75 L858.22,123.05 L859.00,122.33 L859.77,121.60 L860.54,120.85 L861.31,120.09 L862.09,119.31 L862.86,118.53 L863.63,117.75 L864.41,116.97 L865.18,116.20 L865.95,115.45 L866.72,114.70 L867.50,113.98 L868.27,113.27 L869.04,112.58 L869.82,111.90 L870.59,111.23 L871.36,110.57 L872.13,109.91 L872.91,109.25 L873.68,108.58 L874.45,107.90 L875.23,107.20 L876.00,106.49 L876.77,105.75 L877.54,105.00 L878.32,104.24 L879.09,103.47 L879.86,102.69 L880.64,101.91 L881.41,101.13 L882.18,100.36 L882.95,99.60 L883.73,98.86 L884.50,98.13" stroke="#00ff00"/>
</g>
<path d="M343.5 613.5 v-5.5 M343.5 73.5 v5.5 M343.5 613.5 h5.5 M884.5 613.5 h-5.5 M397.5 613.5 v-5.5 M397.5 73.5 v5.5 M343.5 559.5 h5.5 M884.5 559.5 h-5.5 M451.5 613.5 v-5.5 M451.5 73.5 v5.5 M343.5 505.5 h5.5 M884.5 505.5 h-5.5 M505.5 613.5 v-5.5 M505.5 73.5 v5.5 M343.5 451.5 h5.5 M884.5 451.5 h-5.5 M559.5 613.5 v-5.5 M559.5 73.5 v5.5 M343.5 397.5 h5.5 M884.5 397.5 h-5.5 M614.5 613.5 v-5.5 M614.5 73.5 v5.5 M343.5 343.5 h5.5 M884.5 343.5 h-5.5 M668.5 613.5 v-5.5 M668.5 73.5 v5.5 M343.5 289.5 h5.5 M884.5 289.5 h-5.5 M722.5 613.5 v-5.5 M722.5 73.5 v5.5 M343.5 235.5 h5.5 M884.5 235.5 h-5.5 M776.5 613.5 v-5.5 M776.5 73.5 v5.5 M343.5 181.5 h5.5 M884.5 181.5 h-5.5 M830.5 613.5 v-5.5 M830.5 73.5 v5.5 M343.5 127.5 h5.5 M884.5 127.5 h-5.5 M884.5 613.5 v-5.5 M884.5 73.5 v5.5 M343.5 73.5 h5.5 M884.5 73.5 h-5.5" stroke="#262626" stroke-width="1" fill="none"/>
<rect x="343.5" y="73.5" width="541.0" height="540.0" fill="none" stroke="#262626" stroke-width="1"/>
<g font-family="'Liberation Sans', Arial, sans-serif" font-size="13.33px" fill="#262626">
<text x="343.5" y="632.5" text-anchor="middle">0</text>
<text x="397.6" y="632.5" text-anchor="middle">0.5</text>
<text x="451.7" y="632.5" text-anchor="middle">1</text>
<text x="505.8" y="632.5" text-anchor="middle">1.5</text>
<text x="559.9" y="632.5" text-anchor="middle">2</text>
<text x="614.0" y="632.5" text-anchor="middle">2.5</text>
<text x="668.1" y="632.5" text-anchor="middle">3</text>
<text x="722.2" y="632.5" text-anchor="middle">3.5</text>
<text x="776.3" y="632.5" text-anchor="middle">4</text>
<text x="830.4" y="632.5" text-anchor="middle">4.5</text>
<text x="884.5" y="632.5" text-anchor="middle">5</text>
<text x="337" y="619.6" text-anchor="end">0</text>
<text x="337" y="565.6" text-anchor="end">2</text>
<text x="337" y="511.6" text-anchor="end">4</text>
<text x="337" y="457.6" text-anchor="end">6</text>
<text x="337" y="403.6" text-anchor="end">8</text>
<text x="337" y="349.6" text-anchor="end">10</text>
<text x="337" y="295.6" text-anchor="end">12</text>
<text x="337" y="241.6" text-anchor="end">14</text>
<text x="337" y="187.6" text-anchor="end">16</text>
<text x="337" y="133.6" text-anchor="end">18</text>
<text x="337" y="79.6" text-anchor="end">20</text>
</g>
<g font-family="'Liberation Sans', Arial, sans-serif" font-size="14.67px" fill="#262626">
<text x="614" y="653.5" text-anchor="middle">time</text>
<text transform="translate(315,342.7) rotate(-90)" text-anchor="middle" font-size="15.05px">internuclear distance (Angstrom)</text>
</g>
<rect x="699.5" y="86.5" width="172" height="52" fill="#fff" stroke="#262626"/>
<path d="M703.5 96.5 h30" stroke="#0000ff" stroke-width="1.1"/>
<path d="M703.5 112.5 h30" stroke="#ff0000" stroke-width="1.1"/>
<path d="M703.5 128.5 h30" stroke="#00ff00" stroke-width="1.1"/>
<g font-family="'Liberation Sans', Arial, sans-serif" font-size="12px" fill="#000">
<text x="736" y="100.7">A-B bond distance (Ang)</text>
<text x="736" y="117.5">B-C bond distance (Ang)</text>
<text x="736" y="133.9">A-C bond distance (Ang)</text>
</g>
</svg>
</body></html>
